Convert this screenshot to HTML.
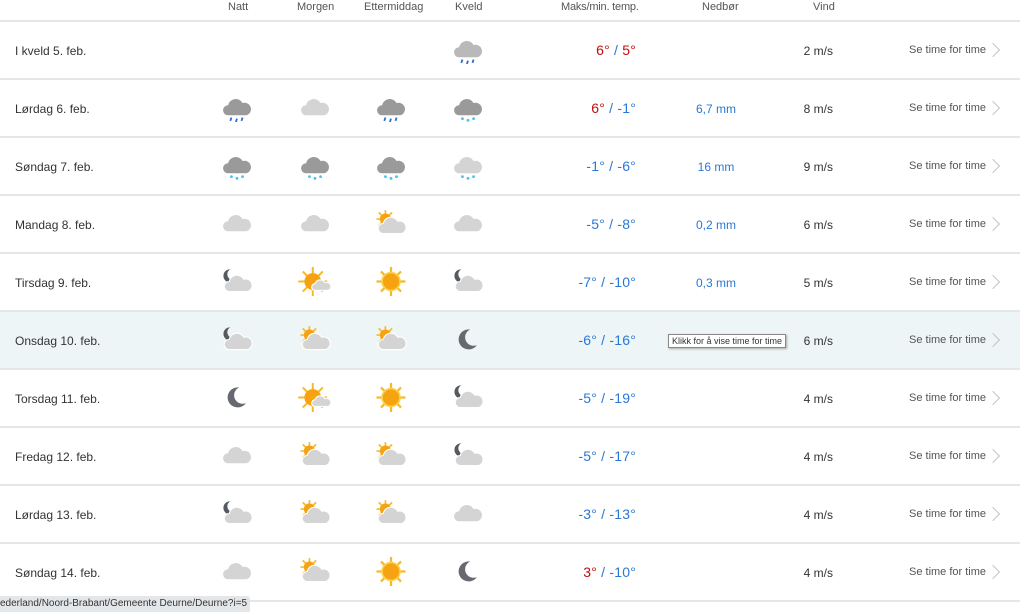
<!DOCTYPE html>
<html><head><meta charset="utf-8"><style>
body{margin:0;width:1024px;height:612px;overflow:hidden;background:#fff;font-family:"Liberation Sans",Arial,sans-serif;position:relative}
.h{position:absolute;top:1px;font-size:11px;color:#555}
.row{position:absolute;left:0;width:1020px;height:56px;border-bottom:2px solid #e3e7ea}
.d{position:absolute;left:15px;top:22px;font-size:12px;color:#333}
.ic{position:absolute;top:13px;width:34px;height:29px}
.t{position:absolute;right:384px;top:20px;font-size:14px;color:#2a78d6;white-space:nowrap;letter-spacing:0.2px}
.r{color:#c40c0c}
.p{position:absolute;left:676px;width:80px;text-align:center;top:22px;font-size:12px;color:#2a78d6}
.w{position:absolute;right:187px;top:22px;font-size:12px;color:#333}
.s{position:absolute;left:909px;top:22px;font-size:11px;color:#555}
.ch{position:absolute;left:988px;top:23px;width:9px;height:9px;border-right:1px solid #c4c4c4;border-top:1px solid #c4c4c4;transform:rotate(45deg)}
</style></head><body>
<svg width="0" height="0" style="position:absolute">
<defs>
<symbol id="cd" viewBox="0 0 30 26"><path d="M7 20a4.5 4.5 0 0 1 0-9a7 7 0 0 1 13-2a5.5 5.5 0 0 1 3.5 11z" fill="#9a9a9a"/></symbol>
<symbol id="cl" viewBox="0 0 30 26"><path d="M7 20a4.5 4.5 0 0 1 0-9a7 7 0 0 1 13-2a5.5 5.5 0 0 1 3.5 11z" fill="#d4d4d4"/></symbol>
<symbol id="rn" viewBox="0 0 30 26"><g stroke="#2a6fc4" stroke-width="1.6"><line x1="10" y1="22" x2="9" y2="25"/><line x1="15" y1="23" x2="14" y2="26"/><line x1="20" y1="22" x2="19" y2="25"/></g></symbol>
<symbol id="sn" viewBox="0 0 30 26"><g fill="#4fc3f0"><circle cx="10" cy="23" r="1.3"/><circle cx="15" cy="24.5" r="1.3"/><circle cx="20" cy="23" r="1.3"/></g></symbol>
<symbol id="su" viewBox="0 0 30 26"><g stroke="#f7b928" stroke-width="2"><line x1="15" y1="0" x2="15" y2="26"/><line x1="2" y1="13" x2="28" y2="13"/><line x1="6" y1="4" x2="24" y2="22"/><line x1="24" y1="4" x2="6" y2="22"/></g><circle cx="15" cy="13" r="8" fill="#f5a310" stroke="#fcd04c" stroke-width="1.5"/></symbol>
<symbol id="mo" viewBox="0 0 30 26"><path d="M17 4a9 9 0 1 0 6 14a7.5 7.5 0 0 1-6-14z" fill="#666a70"/></symbol>
<symbol id="sc" viewBox="0 0 30 26"><g stroke="#f7b928" stroke-width="1.5"><line x1="10" y1="1" x2="10" y2="17"/><line x1="2" y1="9" x2="18" y2="9"/><line x1="4" y1="3" x2="16" y2="15"/><line x1="16" y1="3" x2="4" y2="15"/></g><circle cx="10" cy="9" r="5" fill="#f5a310"/><path d="M8 22a4.5 4.5 0 0 1 0-9a7 7 0 0 1 13-2a5.5 5.5 0 0 1 3.5 11z" fill="#d4d4d4" stroke="#fff" stroke-width="1"/></symbol>
<symbol id="sb" viewBox="0 0 30 26"><g stroke="#f7b928" stroke-width="1.8"><line x1="13" y1="0" x2="13" y2="26"/><line x1="0" y1="13" x2="26" y2="13"/><line x1="4" y1="4" x2="22" y2="22"/><line x1="22" y1="4" x2="4" y2="22"/></g><circle cx="13" cy="13" r="7.5" fill="#f5a310"/><path d="M15 21a3 3 0 0 1 0-6a5 5 0 0 1 9-1a3.5 3.5 0 0 1 3 7z" fill="#d4d4d4" stroke="#fff" stroke-width="1"/></symbol>
<symbol id="mc" viewBox="0 0 30 26"><path d="M9 2a6 6 0 1 0 5 9a5 5 0 0 1-5-9z" fill="#555a60"/><path d="M8 22a4.5 4.5 0 0 1 0-9a7 7 0 0 1 13-2a5.5 5.5 0 0 1 3.5 11z" fill="#d4d4d4" stroke="#fff" stroke-width="1"/></symbol>
</defs></svg>
<div class="h" style="left:228px">Natt</div>
<div class="h" style="left:297px">Morgen</div>
<div class="h" style="left:364px">Ettermiddag</div>
<div class="h" style="left:455px">Kveld</div>
<div class="h" style="left:561px;letter-spacing:-0.2px">Maks/min. temp.</div>
<div class="h" style="left:702px">Nedbør</div>
<div class="h" style="left:813px">Vind</div>
<div style="position:absolute;top:20px;left:0;width:1020px;height:2px;background:#e3e7ea"></div>

<div class="row" style="top:22px"><div class="d">I kveld 5. feb.</div>
<svg class="ic" style="left:451px"><use href="#cl"/><use href="#cd" opacity=".45"/><use href="#rn"/></svg>
<div class="t"><span class="r">6°</span> / <span class="r">5°</span></div><div class="w">2 m/s</div><div class="s">Se time for time</div><div class="ch"></div></div>

<div class="row" style="top:80px"><div class="d">Lørdag 6. feb.</div>
<svg class="ic" style="left:220px"><use href="#cd"/><use href="#rn"/></svg>
<svg class="ic" style="left:298px"><use href="#cl"/></svg>
<svg class="ic" style="left:374px"><use href="#cd"/><use href="#rn"/></svg>
<svg class="ic" style="left:451px"><use href="#cd"/><use href="#sn"/></svg>
<div class="t"><span class="r">6°</span> / -1°</div><div class="p">6,7 mm</div><div class="w">8 m/s</div><div class="s">Se time for time</div><div class="ch"></div></div>

<div class="row" style="top:138px"><div class="d">Søndag 7. feb.</div>
<svg class="ic" style="left:220px"><use href="#cd"/><use href="#sn"/></svg>
<svg class="ic" style="left:298px"><use href="#cd"/><use href="#sn"/></svg>
<svg class="ic" style="left:374px"><use href="#cd"/><use href="#sn"/></svg>
<svg class="ic" style="left:451px"><use href="#cl"/><use href="#sn"/></svg>
<div class="t">-1° / -6°</div><div class="p">16 mm</div><div class="w">9 m/s</div><div class="s">Se time for time</div><div class="ch"></div></div>

<div class="row" style="top:196px"><div class="d">Mandag 8. feb.</div>
<svg class="ic" style="left:220px"><use href="#cl"/></svg>
<svg class="ic" style="left:298px"><use href="#cl"/></svg>
<svg class="ic" style="left:374px"><use href="#sc"/></svg>
<svg class="ic" style="left:451px"><use href="#cl"/></svg>
<div class="t">-5° / -8°</div><div class="p">0,2 mm</div><div class="w">6 m/s</div><div class="s">Se time for time</div><div class="ch"></div></div>

<div class="row" style="top:254px"><div class="d">Tirsdag 9. feb.</div>
<svg class="ic" style="left:220px"><use href="#mc"/></svg>
<svg class="ic" style="left:298px"><use href="#sb"/></svg>
<svg class="ic" style="left:374px"><use href="#su"/></svg>
<svg class="ic" style="left:451px"><use href="#mc"/></svg>
<div class="t">-7° / -10°</div><div class="p">0,3 mm</div><div class="w">5 m/s</div><div class="s">Se time for time</div><div class="ch"></div></div>

<div class="row" style="top:312px;background:#eef5f7"><div class="d">Onsdag 10. feb.</div>
<svg class="ic" style="left:220px"><use href="#mc"/></svg>
<svg class="ic" style="left:298px"><use href="#sc"/></svg>
<svg class="ic" style="left:374px"><use href="#sc"/></svg>
<svg class="ic" style="left:451px"><use href="#mo"/></svg>
<div class="t">-6° / -16°</div>
<div style="position:absolute;left:668px;top:22px;border:1px solid #888;background:#fff;font-size:9px;color:#333;padding:1px 3px;box-shadow:1px 1px 2px #aaa;white-space:nowrap">Klikk for å vise time for time</div>
<div class="w">6 m/s</div><div class="s">Se time for time</div><div class="ch"></div></div>

<div class="row" style="top:370px"><div class="d">Torsdag 11. feb.</div>
<svg class="ic" style="left:220px"><use href="#mo"/></svg>
<svg class="ic" style="left:298px"><use href="#sb"/></svg>
<svg class="ic" style="left:374px"><use href="#su"/></svg>
<svg class="ic" style="left:451px"><use href="#mc"/></svg>
<div class="t">-5° / -19°</div><div class="w">4 m/s</div><div class="s">Se time for time</div><div class="ch"></div></div>

<div class="row" style="top:428px"><div class="d">Fredag 12. feb.</div>
<svg class="ic" style="left:220px"><use href="#cl"/></svg>
<svg class="ic" style="left:298px"><use href="#sc"/></svg>
<svg class="ic" style="left:374px"><use href="#sc"/></svg>
<svg class="ic" style="left:451px"><use href="#mc"/></svg>
<div class="t">-5° / -17°</div><div class="w">4 m/s</div><div class="s">Se time for time</div><div class="ch"></div></div>

<div class="row" style="top:486px"><div class="d">Lørdag 13. feb.</div>
<svg class="ic" style="left:220px"><use href="#mc"/></svg>
<svg class="ic" style="left:298px"><use href="#sc"/></svg>
<svg class="ic" style="left:374px"><use href="#sc"/></svg>
<svg class="ic" style="left:451px"><use href="#cl"/></svg>
<div class="t">-3° / -13°</div><div class="w">4 m/s</div><div class="s">Se time for time</div><div class="ch"></div></div>

<div class="row" style="top:544px"><div class="d">Søndag 14. feb.</div>
<svg class="ic" style="left:220px"><use href="#cl"/></svg>
<svg class="ic" style="left:298px"><use href="#sc"/></svg>
<svg class="ic" style="left:374px"><use href="#su"/></svg>
<svg class="ic" style="left:451px"><use href="#mo"/></svg>
<div class="t"><span class="r">3°</span> / -10°</div><div class="w">4 m/s</div><div class="s">Se time for time</div><div class="ch"></div></div>

<div style="position:absolute;left:0;top:596px;height:16px;background:#e4e7ea;font-size:10px;color:#333;padding:0 3px 0 0;line-height:16px;border-top-right-radius:3px">ederland/Noord-Brabant/Gemeente Deurne/Deurne?i=5</div>
</body></html>
